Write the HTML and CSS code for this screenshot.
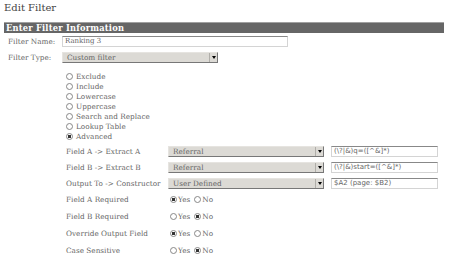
FILE: index.html
```html
<!DOCTYPE html>
<html lang="en">
  <head>
    <meta charset="UTF-8" />
    <title>Edit Filter</title>
    <link rel="stylesheet" href="styles.css">
  </head>
  <body>
    <h1 class="title">Edit Filter</h1>
    <div class="panel">
      <div class="panel-head">Enter Filter Information</div>
      <div class="row">
        <label class="row-label">Filter Name:</label>
        <input class="text name" type="text" value="Ranking 3" />
      </div>
      <div class="row">
        <label class="row-label">Filter Type:</label>
        <div class="select type"><span>Custom filter</span><i class="arrow"></i></div>
      </div>
      <ul class="types">
        <li><span class="radio"></span>Exclude</li>
        <li><span class="radio"></span>Include</li>
        <li><span class="radio"></span>Lowercase</li>
        <li><span class="radio"></span>Uppercase</li>
        <li><span class="radio"></span>Search and Replace</li>
        <li><span class="radio"></span>Lookup Table</li>
        <li><span class="radio on"></span>Advanced</li>
      </ul>
      <div class="advanced">
        <div class="adv-row">
          <label>Field A -&gt; Extract A</label>
          <div class="select field"><span>Referral</span><i class="arrow"></i></div>
          <input class="text expr" type="text" value="(\?|&amp;)q=([^&amp;]*)" />
        </div>
        <div class="adv-row">
          <label>Field B -&gt; Extract B</label>
          <div class="select field"><span>Referral</span><i class="arrow"></i></div>
          <input class="text expr" type="text" value="(\?|&amp;)start=([^&amp;]*)" />
        </div>
        <div class="adv-row">
          <label>Output To -&gt; Constructor</label>
          <div class="select field"><span>User Defined</span><i class="arrow"></i></div>
          <input class="text expr" type="text" value="$A2 (page: $B2)" />
        </div>
        <div class="opt-row">
          <label>Field A Required</label>
          <div class="yesno"><span class="radio on"></span>Yes<span class="radio"></span>No</div>
        </div>
        <div class="opt-row">
          <label>Field B Required</label>
          <div class="yesno"><span class="radio"></span>Yes<span class="radio on"></span>No</div>
        </div>
        <div class="opt-row">
          <label>Override Output Field</label>
          <div class="yesno"><span class="radio on"></span>Yes<span class="radio"></span>No</div>
        </div>
        <div class="opt-row">
          <label>Case Sensitive</label>
          <div class="yesno"><span class="radio"></span>Yes<span class="radio on"></span>No</div>
        </div>
      </div>
    </div>
  </body>
</html>
```

FILE: styles.css
```css
* {
  box-sizing: border-box;
  margin: 0;
  padding: 0;
}
body {
  background-color: #ffffff;
  color: #666666;
  font-family: "DejaVu Serif", serif;
  font-size: 7.3px;
  padding: 2px 4px;
  width: 450px;
  overflow: hidden;
}
.title {
  font-size: 10px;
  font-weight: normal;
  color: #444444;
  height: 20px;
  line-height: 12px;
}
.panel-head {
  background-color: #666666;
  border-top: 1px solid #a0a0a0;
  color: #ffffff;
  font-weight: bold;
  font-size: 8.3px;
  letter-spacing: 0.2px;
  height: 11px;
  line-height: 10px;
  padding-left: 2px;
  width: 440px;
}
.row {
  display: flex;
  align-items: center;
  padding-left: 4px;
  height: 16px;
}
.row:first-of-type {
  margin-top: 5px;
}
.row-label {
  width: 54px;
}
.text {
  font-family: "DejaVu Sans", sans-serif;
  font-size: 7px;
  color: #666666;
  border: 1px solid #d4d4d4;
  border-top-color: #888888;
  background: #ffffff;
  height: 11px;
  padding: 0 2px;
}
.name {
  font-family: "DejaVu Serif", serif;
  width: 226px;
}
.select {
  display: flex;
  align-items: center;
  justify-content: space-between;
  background-color: #dcdad5;
  border: 1px solid #e6e4e0;
  border-right-color: #777777;
  border-bottom-color: #777777;
  height: 11px;
  padding-left: 4px;
}
.type {
  width: 156px;
}
.arrow {
  width: 8px;
  height: 9px;
  border-left: 1px solid #b0aea9;
  position: relative;
}
.arrow::after {
  content: "";
  position: absolute;
  left: 2px;
  top: 3px;
  border-left: 2px solid transparent;
  border-right: 2px solid transparent;
  border-top: 3px solid #000000;
}
.types {
  list-style: none;
  padding-left: 62px;
  margin-top: 6px;
}
.types li {
  display: flex;
  align-items: center;
  height: 10px;
}
.radio {
  display: inline-block;
  flex: none;
  width: 7px;
  height: 7px;
  border: 1px solid #888888;
  border-radius: 50%;
  margin-right: 3px;
  background: #ffffff;
}
.radio.on {
  background: radial-gradient(circle, #333333 0 1.5px, #ffffff 2px);
}
.advanced {
  padding-left: 62px;
  margin-top: 2px;
}
.adv-row {
  display: flex;
  align-items: center;
  height: 16px;
}
.adv-row label,
.opt-row label {
  width: 102px;
}
.field {
  width: 156px;
}
.expr {
  margin-left: 7px;
  width: 107px;
}
.opt-row {
  display: flex;
  align-items: center;
  height: 17px;
}
.yesno {
  display: flex;
  align-items: center;
  padding-left: 2px;
}
.yesno .radio {
  margin-right: 1px;
}
.yesno .radio:last-of-type {
  margin-left: 4px;
}
```
